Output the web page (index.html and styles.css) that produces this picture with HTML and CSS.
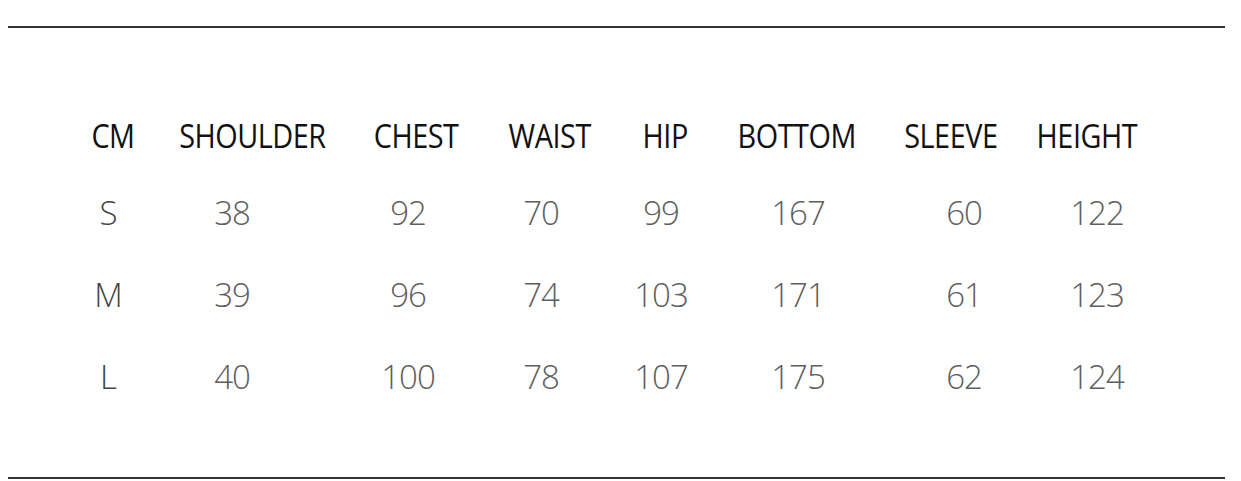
FILE: index.html
```html
<!DOCTYPE html>
<html lang="en">
<head>
<meta charset="utf-8">
<title>Size chart</title>
<link rel="stylesheet" href="styles.css">
</head>
<body>
<section class="sheet">
  <div class="head">
    <span>CM</span>
    <span>SHOULDER</span>
    <span>CHEST</span>
    <span>WAIST</span>
    <span>HIP</span>
    <span>BOTTOM</span>
    <span>SLEEVE</span>
    <span>HEIGHT</span>
  </div>
  <div class="row">
    <span class="size">S</span>
    <span>38</span><span>92</span><span>70</span><span>99</span><span>167</span><span>60</span><span>122</span>
  </div>
  <div class="row">
    <span class="size">M</span>
    <span>39</span><span>96</span><span>74</span><span>103</span><span>171</span><span>61</span><span>123</span>
  </div>
  <div class="row">
    <span class="size">L</span>
    <span>40</span><span>100</span><span>78</span><span>107</span><span>175</span><span>62</span><span>124</span>
  </div>
</section>
</body>
</html>
```
FILE: styles.css
```css
html, body {
  margin: 0;
  padding: 0;
  background: #ffffff;
}

body {
  font-family: "Open Sans", "Noto Sans", sans-serif;
}

.sheet {
  margin: 26px 16px 0 8px;
  border-top: 2px solid #333333;
  border-bottom: 2px solid #333333;
  padding: 88px 0 59px;
}

.head {
  display: grid;
  grid-template-columns: 75px 203px 125px 143px 87px 177px 131px 141px;
  padding-left: 67.5px;
  margin-bottom: 16px;
  font-size: 32px;
  line-height: 40px;
  font-weight: 370;
  letter-spacing: -0.5px;
  color: #111111;
}

.head span {
  justify-self: center;
  white-space: nowrap;
  transform: scaleX(0.9);
}

.row {
  display: grid;
  grid-template-columns: 60px 188px 164px 102px 138px 136px 196px 70px;
  padding-left: 70px;
  height: 82px;
  font-size: 33px;
  line-height: 82px;
  font-weight: 300;
  letter-spacing: -1px;
  color: #5e5e5e;
}

.row span {
  text-align: center;
}

.row .size {
  color: #444444;
}
```
